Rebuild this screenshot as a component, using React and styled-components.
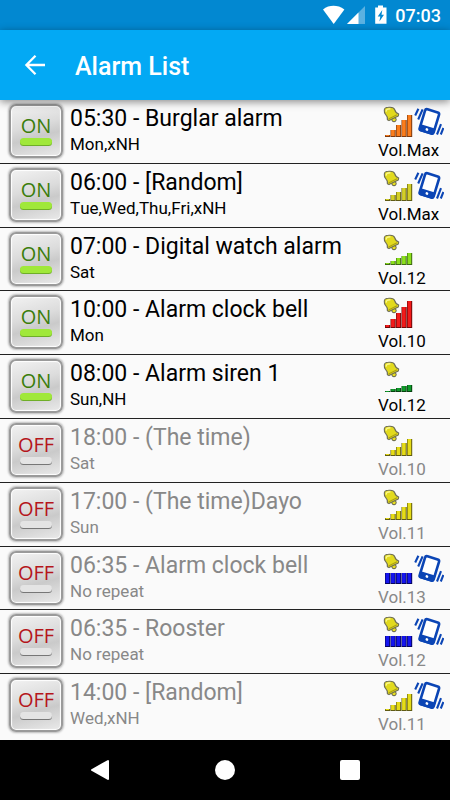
import React, { useState } from "react";
import styled, { createGlobalStyle } from "styled-components";

const GlobalStyle = createGlobalStyle`
  * { box-sizing: border-box; }
  body { margin: 0; background: #fafafa; font-family: Roboto, "Noto Sans", sans-serif; }
`;

const Screen = styled.div`
  display: flex;
  flex-direction: column;
  min-height: 100vh;
`;

const StatusBar = styled.div`
  display: flex;
  align-items: center;
  justify-content: flex-end;
  height: 30px;
  padding: 2px 9px 0 0;
  background: #0288d1;
  color: #fff;
`;

const StatusIcons = styled.svg`
  display: block;
  width: 66px;
  height: 22px;
  margin-right: 6px;
`;

const Clock = styled.time`
  font-size: 18px;
  font-weight: 500;
  line-height: 28px;
`;

const AppBar = styled.header`
  display: flex;
  align-items: center;
  gap: 28px;
  height: 70px;
  padding: 4px 22px 0;
  background: #03a9f4;
  color: #fff;
  box-shadow: 0 2px 8px rgba(0, 0, 0, 0.45);
  z-index: 1;
`;

const BackButton = styled.button`
  display: flex;
  padding: 0;
  border: 0;
  background: none;
  color: inherit;
  cursor: pointer;
`;

const Title = styled.h1`
  margin: 0;
  font-size: 25px;
  font-weight: 500;
  line-height: 32px;
`;

const List = styled.ul`
  flex: 1;
  display: grid;
  grid-auto-rows: 1fr;
  margin: -1px 0 0;
  padding: 0 0 3px;
  list-style: none;
`;

const Row = styled.li`
  display: flex;
  align-items: flex-start;
  padding: 5px 6px 0 9px;
  color: ${(p) => (p.$on ? "#000" : "#888")};

  & + & { border-top: 1px solid #222; padding-top: 4px; }
`;

const Toggle = styled.button`
  display: flex;
  flex-direction: column;
  align-items: center;
  flex: none;
  width: 54px;
  height: 54px;
  padding: 8px 0 0;
  border: 2px solid #9a9a9a;
  border-radius: 7px;
  background: linear-gradient(165deg, #f2f2f2 0%, #dcdcdc 40%, #cacaca 60%, #eaeaea 100%);
  box-shadow: inset 0 0 1px 1px #fff, 0 0 2px 1px #bbb;
  font-family: "Open Sans", "Noto Sans", sans-serif;
  font-size: 20px;
  line-height: 24px;
  color: ${(p) => (p.$on ? "#3b7d0c" : "#b5161b")};
  cursor: pointer;
`;

const Lamp = styled.span`
  width: 32px;
  height: 7px;
  border-radius: 4px;
  background: ${(p) => (p.$on ? "#a0e83a" : "#e4e4e4")};
  box-shadow: 0 1px 0 ${(p) => (p.$on ? "#6fae28" : "#777")};
`;

const Info = styled.div`
  flex: 1;
  min-width: 0;
  padding-left: 7px;
`;

const Name = styled.div`
  font-size: 23px;
  line-height: 30px;
  white-space: nowrap;
`;

const Days = styled.div`
  font-size: 17px;
  line-height: 20px;
  font-kerning: none;
`;

const Meter = styled.div`
  flex: none;
  width: 66px;
`;

const MeterArt = styled.svg`
  display: block;
  width: 66px;
  height: 34px;
`;

const Volume = styled.div`
  font-size: 17px;
  line-height: 24px;
`;

const NavBar = styled.nav`
  display: flex;
  align-items: center;
  justify-content: center;
  gap: 85px;
  height: 60px;
  background: #000;
`;

const NavButton = styled.button`
  display: flex;
  justify-content: center;
  width: 40px;
  padding: 0;
  border: 0;
  background: none;
  cursor: pointer;
`;

const levels = {
  orange: { fill: "#fb7d1c", edge: "#7c3a10", heights: [2, 7, 12, 17, 22] },
  olive: { fill: "#d3cf27", edge: "#5f5b14", heights: [2, 6, 9, 13, 17] },
  lime: { fill: "#8be01c", edge: "#3f6a14", heights: [2, 4, 7, 9, 12] },
  red: { fill: "#f31a1a", edge: "#700808", heights: [3, 9, 15, 21, 27] },
  green: { fill: "#0f9a2a", edge: "#06400f", heights: [1, 3, 4, 6, 7] },
  yellow: { fill: "#e6dc17", edge: "#5f5b14", heights: [2, 6, 9, 13, 17] },
  blue: { fill: "#1515f0", edge: "#050560", heights: [11, 11, 11, 11, 11] },
};

const alarms = [
  { on: true, name: "05:30 - Burglar alarm", days: "Mon,xNH", level: "orange", volume: "Vol.Max", vibrate: true },
  { on: true, name: "06:00 - [Random]", days: "Tue,Wed,Thu,Fri,xNH", level: "olive", volume: "Vol.Max", vibrate: true },
  { on: true, name: "07:00 - Digital watch alarm", days: "Sat", level: "lime", volume: "Vol.12" },
  { on: true, name: "10:00 - Alarm clock bell", days: "Mon", level: "red", volume: "Vol.10" },
  { on: true, name: "08:00 - Alarm siren 1", days: "Sun,NH", level: "green", volume: "Vol.12" },
  { on: false, name: "18:00 - (The time)", days: "Sat", level: "yellow", volume: "Vol.10" },
  { on: false, name: "17:00 - (The time)Dayo", days: "Sun", level: "yellow", volume: "Vol.11" },
  { on: false, name: "06:35 - Alarm clock bell", days: "No repeat", level: "blue", volume: "Vol.13", vibrate: true },
  { on: false, name: "06:35 - Rooster", days: "No repeat", level: "blue", volume: "Vol.12", vibrate: true },
  { on: false, name: "14:00 - [Random]", days: "Wed,xNH", level: "yellow", volume: "Vol.11", vibrate: true },
];

function Bell() {
  return (
    <g transform="translate(7.4 0)" strokeLinejoin="round">
      <circle cx="14.6" cy="15.6" r="2.2" fill="#e8df20" stroke="#5f5f4c" strokeWidth="1" />
      <path
        d="M4.9 6C5 4 6.6 3.4 9 3.3C12.5 2.9 14.6 3.6 15.2 5.5C15.8 8 16.8 9 19.3 10L18.9 12L9.6 16.6L8 15.8C8.3 13 7.4 11.6 6 10.2C5 9 4.8 7.5 4.9 6z"
        fill="#e2da1e" stroke="#6d6d55" strokeWidth="1.1"
      />
      <path d="M6.9 7.6C6.6 5.4 8 4.9 11 4.8" fill="none" stroke="#fbf88c" strokeWidth="1.4" />
      <path d="M9.2 15L17.6 10.8" stroke="#aba012" strokeWidth="1.1" />
    </g>
  );
}

function Phone() {
  return (
    <g fill="none" stroke="#0b45b5">
      <g transform="rotate(17 57.5 17)">
        <rect x="50.2" y="6.4" width="14.6" height="22" rx="2" fill="#fff" strokeWidth="2.6" />
        <path d="M49.4 22.5h16.2v5a2 2 0 0 1-2 2h-12.2a2 2 0 0 1-2-2z" fill="#0b45b5" stroke="none" />
        <circle cx="57.5" cy="25.9" r="1.4" fill="#fff" stroke="none" />
      </g>
      <path d="M43.2 11.5L46.4 4.7M46.2 15.5L50.6 5.3M65 30.5L69 20.1M68.8 30.5L71.4 24" strokeWidth="2.1" />
    </g>
  );
}

function LevelArt({ level, vibrate }) {
  const { fill, edge, heights } = levels[level];
  return (
    <MeterArt viewBox="6 0 66 34" aria-hidden="true">
      {heights.map((h, i) => (
        <g key={i}>
          <rect x={13 + i * 5.5} y={33 - h} width="5.2" height={h} fill={edge} />
          <rect x={13.6 + i * 5.5} y={33 - h} width="3.6" height={Math.max(h - 1, 1)} fill={fill} />
        </g>
      ))}
      <Bell />
      {vibrate && <Phone />}
    </MeterArt>
  );
}

function AlarmRow({ alarm }) {
  const [on, setOn] = useState(alarm.on);
  return (
    <Row $on={on}>
      <Toggle type="button" $on={on} aria-pressed={on} onClick={() => setOn(!on)}>
        {on ? "ON" : "OFF"}
        <Lamp $on={on} />
      </Toggle>
      <Info>
        <Name>{alarm.name}</Name>
        <Days>{alarm.days}</Days>
      </Info>
      <Meter>
        <LevelArt level={alarm.level} vibrate={alarm.vibrate} />
        <Volume>{alarm.volume}</Volume>
      </Meter>
    </Row>
  );
}

export default function App() {
  return (
    <Screen>
      <GlobalStyle />
      <StatusBar>
        <StatusIcons viewBox="0 0 66 22" aria-hidden="true">
          <path d="M0 4.5C3 1.8 7 .8 10.5 .8S18 1.8 21.4 4.5L10.7 19z" fill="#fff" />
          <path d="M42 1V19H24z" fill="#fff" opacity=".35" />
          <path d="M35.5 7.5V19H24z" fill="#fff" />
          <path d="M55 .5h5v2h3.5v16.3H52.2V2.5H55z" fill="#fff" />
          <path d="M59.3 5L54.7 11.6h2.6L56.4 16.5 61 9.7h-2.5z" fill="#0288d1" />
        </StatusIcons>
        <Clock>07:03</Clock>
      </StatusBar>
      <AppBar>
        <BackButton type="button" aria-label="Back">
          <svg width="25" height="24" viewBox="0 0 25 24" fill="none" stroke="#fff" strokeWidth="2.3">
            <path d="M23 10H5M13.5 .8L4.4 10l9.1 9.2" />
          </svg>
        </BackButton>
        <Title>Alarm List</Title>
      </AppBar>
      <List>
        {alarms.map((alarm, i) => (
          <AlarmRow key={i} alarm={alarm} />
        ))}
      </List>
      <NavBar>
        <NavButton type="button" aria-label="Back">
          <svg width="20" height="22" viewBox="0 0 20 22">
            <path d="M18 2v18L2 11z" fill="#fff" stroke="#fff" strokeWidth="2" strokeLinejoin="round" />
          </svg>
        </NavButton>
        <NavButton type="button" aria-label="Home">
          <svg width="20" height="20" viewBox="0 0 20 20">
            <circle cx="10" cy="10" r="10" fill="#fff" />
          </svg>
        </NavButton>
        <NavButton type="button" aria-label="Recent apps">
          <svg width="20" height="20" viewBox="0 0 20 20">
            <rect width="20" height="20" rx="2" fill="#fff" />
          </svg>
        </NavButton>
      </NavBar>
    </Screen>
  );
}
